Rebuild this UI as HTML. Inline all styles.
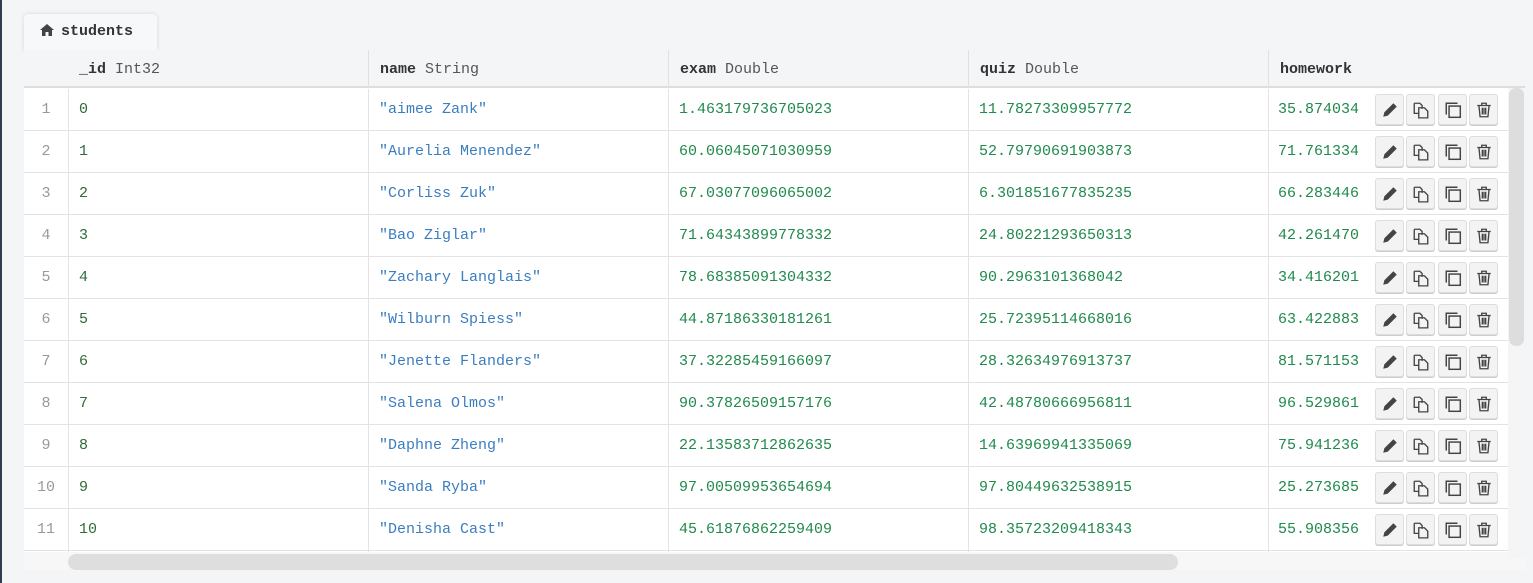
<!DOCTYPE html>
<html><head><style>
*{margin:0;padding:0;box-sizing:border-box}
body{width:1533px;height:583px;background:#f4f5f7;position:relative;overflow:hidden;font-family:"Liberation Mono",monospace;font-size:15px}
.strip{position:absolute;left:0;top:0;width:2px;height:583px;background:#2f3e4e}
.tab{position:absolute;left:24px;top:14px;width:133px;height:37px;background:#f7f8fa;border-radius:4px 4px 0 0;box-shadow:0 0 4px rgba(0,0,0,.12);font-weight:bold;color:#333;font-size:15px;padding:9px 0 0 15px}
.tab svg{vertical-align:-2px;margin-right:6px}
.tbl{position:absolute;left:24px;top:50px;width:1501px;height:520px;background:#fff;overflow:hidden}
.hdr{position:absolute;left:0;top:0;width:1501px;height:38px;background:#f4f5f7;border-bottom:2px solid #ddd}
.h{position:absolute;top:0;height:38px;line-height:40px;padding-left:11px;color:#555;border-left:1px solid #e0e0e0}
.h b{color:#333}
.row{position:absolute;left:0;width:1484px;height:42px;border-bottom:1px solid #e3e3e3;line-height:41px}
.c{position:absolute;top:0;height:42px;padding-left:10px;border-left:1px solid #e3e3e3;white-space:nowrap;overflow:hidden}
.n{left:0;width:44px;color:#999;text-align:center;padding:0;border:none}
.id{left:44px;width:300px;color:#2e6b3a}
.nm{left:344px;width:300px;color:#3b7ec0}
.ex{left:644px;width:300px;color:#1f8a4c}
.qz{left:944px;width:300px;color:#1f8a4c}
.hw{left:1244px;width:93px;color:#1f8a4c;padding-left:9px}
.btn{position:absolute;top:5px;width:29px;height:31px;background:#f3f3f3;border:1px solid #ddd;border-radius:3px;box-shadow:0 1px 0 #ccc}
.btn svg{position:absolute;left:5px;top:6px}
.vs{position:absolute;left:1484px;top:38px;width:17px;height:470px;background:#f5f5f5}
.vs div{position:absolute;left:1px;top:0;width:15px;height:258px;background:#ddd;border-radius:7px}
.hs{position:absolute;left:44px;top:504px;width:1110px;height:16px;background:#dedede;border-radius:8px}
.hstr{position:absolute;left:0;top:502px;width:1501px;height:18px;background:#f7f7f7}
</style></head><body>
<div class="strip"></div>
<div class="tab"><svg width="16" height="14" viewBox="0 0 16 14"><path d="M8 1 L1 7 L3 7 L3 13 L6.5 13 L6.5 9 L9.5 9 L9.5 13 L13 13 L13 7 L15 7 Z" fill="#444"/></svg>students</div>
<div class="tbl">
<div class="hdr">
<div class="h" style="left:44px;border:none"><b>_id</b> Int32</div>
<div class="h" style="left:344px"><b>name</b> String</div>
<div class="h" style="left:644px"><b>exam</b> Double</div>
<div class="h" style="left:944px"><b>quiz</b> Double</div>
<div class="h" style="left:1244px"><b>homework</b></div>
</div>
<div id="rows"></div>
<div class="hstr"></div>
<div class="hs"></div>
<div class="vs"><div></div></div>
</div>
<script>
var d=[["aimee Zank","1.463179736705023","11.78273309957772","35.874034"],
["Aurelia Menendez","60.06045071030959","52.79790691903873","71.761334"],
["Corliss Zuk","67.03077096065002","6.301851677835235","66.283446"],
["Bao Ziglar","71.64343899778332","24.80221293650313","42.261470"],
["Zachary Langlais","78.68385091304332","90.2963101368042","34.416201"],
["Wilburn Spiess","44.87186330181261","25.72395114668016","63.422883"],
["Jenette Flanders","37.32285459166097","28.32634976913737","81.571153"],
["Salena Olmos","90.37826509157176","42.48780666956811","96.529861"],
["Daphne Zheng","22.13583712862635","14.63969941335069","75.941236"],
["Sanda Ryba","97.00509953654694","97.80449632538915","25.273685"],
["Denisha Cast","45.61876862259409","98.35723209418343","55.908356"],
["","","",""]];
var ic=['<svg width="18" height="18" viewBox="0 0 16 16"><path d="M2 14 L3 10 L11 2 L14 5 L6 13 Z" fill="#444"/></svg>',
'<svg width="18" height="18" viewBox="0 0 16 16" fill="none" stroke="#444" stroke-width="1.2"><path d="M2 2h5l2 2v3M2 2v9h4"/><path d="M6 6h5l3 3v6H6z"/></svg>',
'<svg width="18" height="18" viewBox="0 0 16 16" fill="none" stroke="#444" stroke-width="1.3"><path d="M2 12V2h10"/><rect x="4.5" y="4.5" width="10" height="10"/></svg>',
'<svg width="18" height="18" viewBox="0 0 16 16" fill="none" stroke="#444" stroke-width="1.2"><path d="M2 4h12M6 4V2h4v2M3.5 4l1 10h7l1-10M6.5 6v6M8 6v6M9.5 6v6"/></svg>'];
var h='';
d.forEach(function(r,i){
var b='';if(r[0]){[1351,1382,1414,1445].forEach(function(x,k){b+='<div class="btn" style="left:'+x+'px">'+ic[k]+'</div>'});}
h+='<div class="row" style="top:'+(39+i*42)+'px"><div class="c n">'+(r[0]?i+1:'')+'</div><div class="c id">'+(r[0]?i:'')+'</div><div class="c nm">'+(r[0]?'"'+r[0]+'"':'')+'</div><div class="c ex">'+r[1]+'</div><div class="c qz">'+r[2]+'</div><div class="c hw">'+r[3]+'</div>'+b+'</div>';});
document.getElementById('rows').innerHTML=h;
</script>
</body></html>
